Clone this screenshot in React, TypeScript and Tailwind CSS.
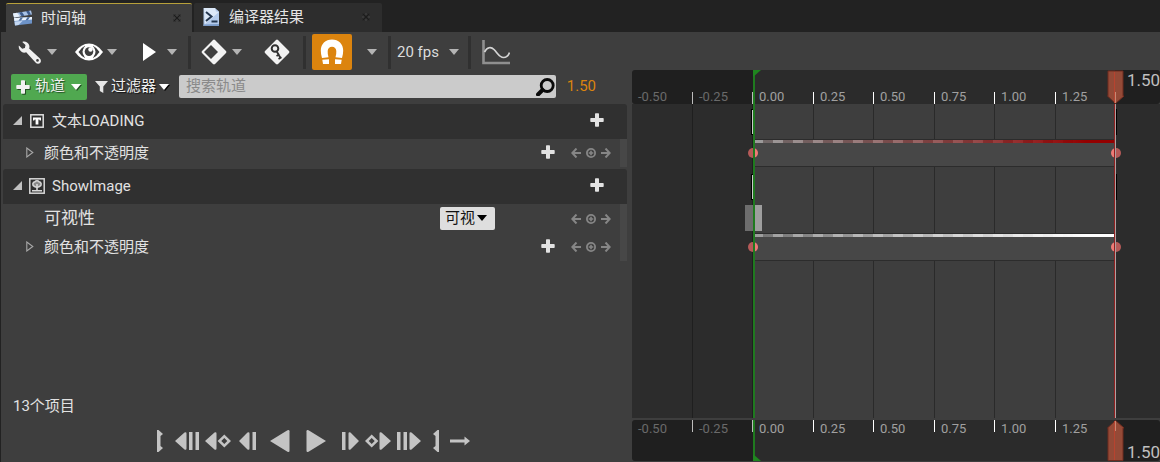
import React from "react";

const STEP_TIMES = [-0.25, 0, 0.25, 0.5, 0.75, 1, 1.25];
const LABEL_TIMES = [-0.5, ...STEP_TIMES];
const START = 0;
const END = 1.5;

const timeToX = (t: number) => Math.floor(120.7 + 242 * t);

function Caret({ className = "text-[#b4b4b4]" }: { className?: string }) {
  return (
    <svg className={`h-[6px] w-[10px] shrink-0 ${className}`} viewBox="0 0 10 6" fill="currentColor">
      <path d="M0 0h10L5 6z" />
    </svg>
  );
}

function Plus() {
  return (
    <svg className="size-[14px] shrink-0" viewBox="0 0 14 14" fill="currentColor">
      <path d="M5 1q0-.7.700-.7h2.600q.7 0 .7.700v4h4q.7 0 .7.700v2.600q0 .7-.7.700H9v4q0 .7-.7.700H5.700q-.7 0-.7-.7V9H1q-.7 0-.7-.7V5.700q0-.7.700-.7h4z" />
    </svg>
  );
}

function Separator() {
  return <div className="h-[33px] w-[3px] shrink-0 bg-[#303030]" />;
}

function CloseMark() {
  return (
    <svg className="size-[8px]" viewBox="0 0 8 8">
      <path d="M0 0h8v8H0z" fill="#222" opacity=".4" />
      <path d="M1 1l6 6M7 1L1 7" stroke="#1c1c1c" strokeWidth="1" />
      <path d="M4 0v2M4 8V6M0 4h2M8 4H6" stroke="#484848" />
    </svg>
  );
}

function ToolButton({ label, caret = true, children }: { label: string; caret?: boolean; children: React.ReactNode }) {
  return (
    <button type="button" aria-label={label} className="flex items-center gap-[3px]">
      <span className="flex h-[30px] w-[30px] items-center justify-center">{children}</span>
      {caret && <Caret />}
    </button>
  );
}

function Tabs() {
  return (
    <div className="flex h-8 items-end gap-[2px] bg-[#222] pl-[5px] text-[15px] text-[#e4e4e4] [text-shadow:1px_1px_1px_#000]">
      <div className="flex h-[29px] w-[186px] items-center rounded-t-[2px] border-t border-[#b7a03a] bg-[#3e3e3e] pr-[11px] pl-[7px]">
        <svg className="h-[16px] w-[20px]" viewBox="0 0 20 16">
          <path d="M0 3.500L18 .5l1 4L1 7.500z" fill="#a9c3e6" />
          <path d="M0 3.500l4-.7 3 3.700-6 1z" fill="#e8f1fc" />
          <path d="M6 2.500l3-.5 2.500 3.800-3 .5zM13 1.300l3-.5 2 3.900-2.600.4z" fill="#3d5c8c" />
          <path d="M1 8l18-1v6.500L2 15.500z" fill="#6d93c8" />
          <path d="M1 8l18-1v2.500L1.300 11z" fill="#eaf3fd" />
          <path d="M7.500 7.700l-2 3 2.500-.3 2-2.900zM14.500 7.300l-2 2.900 2.500-.3 2-2.800z" fill="#4c6d9c" />
          <path d="M1.500 11.500l8-.5-4 4L2 15.500z" fill="#c3d7f1" />
        </svg>
        <button type="button" className="ml-2 flex-1 text-left">时间轴</button>
        <button type="button" aria-label="关闭时间轴"><CloseMark /></button>
      </div>
      <div className="flex h-[29px] w-[188px] items-center rounded-t-[2px] bg-[#2d2d2d] pr-[12px] pb-px pl-[8px]">
        <svg className="h-[20px] w-[19px]" viewBox="0 0 19 20">
          <path d="M1.500 1H13l4 3.500V19H1.500z" fill="#b4cbec" />
          <path d="M2 1h11l1 3.500 3 .5-14 12z" fill="#dce8f8" />
          <path d="M1.500 17.500L17 17v2H1.500z" fill="#7c9cc9" />
          <path d="M4 5l5.500 4.500L4 14" fill="none" stroke="#23364f" strokeWidth="2" />
          <path d="M9.500 14.500h6" stroke="#23364f" strokeWidth="2" />
        </svg>
        <button type="button" className="ml-2 flex-1 text-left">编译器结果</button>
        <button type="button" aria-label="关闭编译器结果"><CloseMark /></button>
      </div>
    </div>
  );
}

function Toolbar() {
  return (
    <div className="flex h-[38px] items-center pt-[2px] pl-[13px] text-white">
      <div className="flex gap-[17px]">
        <ToolButton label="操作">
          <svg className="size-[23px]" viewBox="0 0 23 23">
            <path d="M4.300.9C7 0 10 1.300 11.100 4c.5 1.300.4 2.500 0 3.500l10.600 9.700c1.500 1.500 1.600 3.500.4 4.700s-3.200 1.100-4.600-.4L8.200 11.300c-1.600.6-3.300.4-4.700-.6C1.300 9.300.3 6.700.9 4.600L4.200 7.700 6.900 6.900l.6-2.800z" fill="#f0f0f0" />
            <circle cx="19.500" cy="19.400" r="1.300" fill="#3e3e3e" />
          </svg>
        </ToolButton>
        <ToolButton label="视图选项">
          <svg className="h-[18px] w-[28px]" viewBox="0 0 28 18">
            <path d="M0 9Q6 .5 14 .5T28 9q-6 8.500-14 8.500T0 9z" fill="#fff" />
            <path d="M3.500 9q3-4.500 6.500-6.200-2.500 6.200 0 12.200Q6.500 13.500 3.500 9zM24.500 9q-3-4.500-6.500-6.200 2.500 6.200 0 12.200Q21.500 13.500 24.500 9z" fill="#3e3e3e" />
            <circle cx="14" cy="8.800" r="6.500" fill="#fff" />
            <circle cx="14" cy="8.600" r="4.300" fill="#3e3e3e" />
            <circle cx="15.500" cy="6.500" r="2.200" fill="#fff" />
          </svg>
        </ToolButton>
        <ToolButton label="播放选项">
          <svg className="h-[18px] w-[14px]" viewBox="0 0 14 18"><path d="M1 0l13 9-13 9z" fill="#fff" /></svg>
        </ToolButton>
      </div>
      <div className="ml-[11px] flex items-center gap-2">
        <Separator />
        <div className="flex gap-5">
          <ToolButton label="关键帧选项">
            <svg className="size-[26px]" viewBox="0 0 26 26">
              <path d="M13 .4Q13.600.4 14 1l11 11q.9 1 0 2L14 25q-1 .9-2 0L1 14q-.9-1 0-2L12 1q.4-.6 1-.6z" fill="#f2f2f2" />
              <path d="M10 6l7 7-7 7-7-7z" fill="#3e3e3e" />
            </svg>
          </ToolButton>
          <ToolButton label="自动关键帧" caret={false}>
            <svg className="size-[26px]" viewBox="0 0 26 26">
              <path d="M13 .4Q13.600.4 14 1l11 11q.9 1 0 2L14 25q-1 .9-2 0L1 14q-.9-1 0-2L12 1q.4-.6 1-.6z" fill="#f2f2f2" />
              <circle cx="11" cy="9.500" r="3.300" fill="none" stroke="#303030" strokeWidth="2" />
              <path d="M12.500 12l4 7M12.500 17l3-1.800M14.500 20l3-1.800" fill="none" stroke="#303030" strokeWidth="1.800" />
            </svg>
          </ToolButton>
        </div>
      </div>
      <div className="ml-[11px] flex items-center gap-[6px]">
        <Separator />
        <button type="button" aria-label="对齐" aria-pressed="true" className="flex h-[36px] w-[40px] items-center justify-center rounded-[2px] bg-[#dc840e]">
          <svg className="h-[26px] w-[24px]" viewBox="0 0 24 26" fill="#fff">
            <path d="M2 19Q.8 15.500.8 11.500C.8 5 5.500.5 12 .5S23.200 5 23.200 11.500q0 4-1.200 7.500l-6.500-.8q1-3 .8-6.200C16.200 9.500 14.500 7.800 12 7.800S7.800 9.500 7.700 12q-.2 3.200.8 6.200z" />
            <path d="M2.300 20.800l6.700-.6V25H3zM21.700 20.800L15 20.200V25h6z" />
          </svg>
        </button>
      </div>
      <button type="button" aria-label="对齐选项" className="ml-[15px]"><Caret /></button>
      <div className="ml-[11px] flex items-center gap-[6px]">
        <Separator />
        <label className="relative flex items-center">
          <select aria-label="帧率" className="w-[62px] appearance-none bg-transparent text-[15px] text-[#dcdcdc] outline-none">
            <option>20 fps</option>
          </select>
          <Caret className="pointer-events-none absolute right-0 text-[#b4b4b4]" />
        </label>
      </div>
      <div className="ml-[9px] flex items-center gap-[11px]">
        <Separator />
        <button type="button" aria-label="曲线编辑器">
          <svg className="h-[26px] w-[28px]" viewBox="0 0 28 26" fill="none">
            <path d="M1.500 1v23H28" stroke="#8f8f8f" strokeWidth="2.600" />
            <path d="M2.500 13C5 8 9 7.500 12 10.500c3.500 3.500 5.500 8 9.500 8 3 0 5-2 6-5" stroke="#d4d4d4" strokeWidth="1.700" />
          </svg>
        </button>
      </div>
    </div>
  );
}

function FilterBar() {
  return (
    <div className="flex h-[34px] items-center pr-[36px] pb-px pl-[10px] text-[15px] text-[#f0f0f0]">
      <button type="button" className="flex h-[26px] items-center gap-[5px] rounded-[2px] bg-[#50a850] pr-[6px] pl-[5px] [text-shadow:1px_1px_1px_#245024]">
        <span className="drop-shadow-[1px_1px_0_#245024]"><Plus /></span>
        <span>轨道</span>
        <Caret className="ml-px text-white drop-shadow-[1px_1px_0_#245024]" />
      </button>
      <button type="button" className="ml-2 flex items-center gap-[3px] [text-shadow:1px_1px_1px_#111]">
        <svg className="h-[12px] w-[13px]" viewBox="0 0 13 12"><path d="M0 0h13L8.300 5.500V12l-3.500-2V5.500z" fill="#e6e6e6" /></svg>
        <span>过滤器</span>
        <Caret className="text-white drop-shadow-[1px_1px_0_#000]" />
      </button>
      <label className="ml-[10px] flex h-[23px] min-w-0 flex-1 items-center rounded-[2px] bg-[#cbcbcb] pr-px pl-[7px]">
        <input type="search" aria-label="搜索轨道" placeholder="搜索轨道" className="min-w-0 flex-1 bg-transparent text-[15px] text-[#222] outline-none placeholder:text-[#8a8a8a]" />
        <svg className="h-[18px] w-[19px]" viewBox="0 0 19 18" fill="none" stroke="#0a0a0a">
          <circle cx="11.200" cy="7.500" r="6" strokeWidth="2.800" />
          <path d="M6.500 12L2 16.500" strokeWidth="4" strokeLinecap="round" />
        </svg>
      </label>
      <span className="ml-[11px] text-[#dc840e]">1.50</span>
    </div>
  );
}

function GroupRow({ name, icon }: { name: string; icon: React.ReactNode }) {
  return (
    <div className="flex h-[35px] items-center rounded-t-[3px] bg-[#303030] pr-[23px] pb-px pl-[10px]">
      <button type="button" aria-label={`折叠 ${name}`} className="w-[10px] pb-[2px]">
        <svg className="size-[9px]" viewBox="0 0 9 9"><path d="M9 0v9H0z" fill="#c0c0c0" /></svg>
      </button>
      <span className="mr-[7px] ml-[6px] flex w-[16px] justify-center">{icon}</span>
      <span className="flex-1">{name}</span>
      <button type="button" aria-label={`添加到 ${name}`} className="pb-[2px]"><Plus /></button>
    </div>
  );
}

function KeyNav() {
  return (
    <div className="flex items-center gap-[5px] text-[#868686]">
      <button type="button" aria-label="上一个关键帧">
        <svg className="size-[10px]" viewBox="0 0 10 10" fill="none" stroke="currentColor" strokeWidth="2"><path d="M5.500.5L1.300 5l4.200 4.500M1.500 5H10" /></svg>
      </button>
      <button type="button" aria-label="添加关键帧">
        <svg className="size-[10px]" viewBox="0 0 10 10" fill="none" stroke="currentColor" strokeWidth="1.800"><circle cx="5" cy="5" r="4.100" /><path d="M5 2.700v4.600M2.700 5h4.600" strokeWidth="1.600" /></svg>
      </button>
      <button type="button" aria-label="下一个关键帧">
        <svg className="size-[10px]" viewBox="0 0 10 10" fill="none" stroke="currentColor" strokeWidth="2"><path d="M4.500.5L8.700 5 4.500 9.500M8.500 5H0" /></svg>
      </button>
    </div>
  );
}

function ColorRow() {
  return (
    <div className="flex h-[28px] items-center pl-[23px]">
      <button type="button" aria-label="展开" className="w-[18px] pb-[2px]">
        <svg className="h-[11px] w-[8px]" viewBox="0 0 8 11"><path d="M.8 1v9L6.800 5.500z" fill="none" stroke="#a8a8a8" strokeWidth="1.100" /></svg>
      </button>
      <span className="flex-1">颜色和不透明度</span>
      <button type="button" aria-label="添加颜色" className="mr-4 pb-[2px]"><Plus /></button>
      <KeyNav />
      <div className="ml-[9px] w-[7px] self-stretch bg-[#474747]" />
    </div>
  );
}

function Outliner() {
  return (
    <div className="mr-[5px] ml-[2px] text-[15px] text-[#e2e2e2]">
      <GroupRow
        name="文本LOADING"
        icon={
          <svg className="size-[14px]" viewBox="0 0 14 14">
            <rect x=".8" y=".8" width="12.400" height="12.400" fill="none" stroke="#e0e0e0" strokeWidth="1.500" />
            <path d="M3 3.500h8V6.500H9.800L9.300 5.400H8.400v5.100H5.600V5.400H4.700L4.200 6.500H3z" fill="#fff" />
          </svg>
        }
      />
      <div className="pb-[2px]"><ColorRow /></div>
      <GroupRow
        name="ShowImage"
        icon={
          <svg className="size-[16px]" viewBox="0 0 16 16" fill="none" stroke="#d8d8d8">
            <rect x=".8" y=".8" width="14.400" height="14.400" strokeWidth="1.500" />
            <path d="M5.500 8.500C2.800 7.500 3.500 4 6 3.800c1-1.300 3-1.300 4 0 2.500.2 3.200 3.700.5 4.700-1.500.8-3.500.8-5 0z" strokeWidth="1.500" fill="#8a8a8a" />
            <path d="M8 6v6.500M3 12.700h10" strokeWidth="1.600" />
          </svg>
        }
      />
      <div className="flex h-[29px] items-center pl-[41px]">
        <label htmlFor="visibility" className="flex-1 text-[17px]">可视性</label>
        <div className="relative mr-[76px] flex items-center pb-px">
          <select id="visibility" className="h-[23px] w-[55px] appearance-none rounded-[2px] bg-[#dedede] pl-[5px] text-[15px] leading-[22px] text-[#111] outline-none">
            <option>可视</option>
          </select>
          <Caret className="pointer-events-none absolute right-[8px] text-black" />
        </div>
        <KeyNav />
        <div className="ml-[9px] w-[7px] self-stretch bg-[#474747]" />
      </div>
      <ColorRow />
    </div>
  );
}

const TRANSPORT = [
  { label: "设置起点", box: "w-[18px]", w: 6, d: "M0 0h1.500L6 4 3.500 6v10L6 18l-4.500 4H0z" },
  { label: "到开头", box: "w-[36px]", w: 24, d: "M0 11L9.500 2.500q2-1 2 1v15q0 2-2 1zM14 2h3.500v18H14zM20.500 2H24v18h-3.500z" },
  { label: "上一关键帧", box: "w-[26px]", w: 26, d: "M0 11L9.500 2.500q2-1 2 1v15q0 2-2 1zM19.300 4.500L26 11l-6.700 6.500L12.600 11zM19.300 8l-3 3 3 3 3-3z" },
  { label: "后退一帧", box: "w-[34px]", w: 18, d: "M0 11L8.500 2.500q2-1 2 1v15q0 2-2 1zM13.500 2H17v18h-3.500z" },
  { label: "倒放", box: "w-[30px]", w: 20, d: "M0 11L17.500.3q2-.8 2 1v19.400q0 1.800-2 1z" },
  { label: "播放", box: "w-[42px]", w: 20, d: "M20 11L2.500.3q-2-.8-2 1v19.400q0 1.800 2 1z" },
  { label: "前进一帧", box: "w-[26px]", w: 18, d: "M1 2h3.500v18H1zM18 11L9.500 2.500q-2-1-2 1v15q0 2 2 1z" },
  { label: "下一关键帧", box: "w-[30px]", w: 26, d: "M26 11l-9.500-8.500q-2-1-2 1v15q0 2 2 1zM6.700 4.500L0 11l6.700 6.500 6.700-6.500zM6.700 8l3 3-3 3-3-3z" },
  { label: "到结尾", box: "w-[32px]", w: 24, d: "M24 11l-9.500-8.500q-2-1-2 1v15q0 2 2 1zM0 2h3.500v18H0zM6.500 2H10v18H6.500z" },
  { label: "设置终点", box: "w-[22px]", w: 6, d: "M6 0H4.500L0 4l2.500 2v10L0 18l4.500 4H6z" },
  { label: "循环模式", box: "w-[26px]", w: 20, d: "M0 9.500h14.500V6.500L20 11l-5.500 4.500v-3H0z" },
];

function Transport() {
  return (
    <div className="flex justify-center pr-[10px] pb-[10px] text-[#c4c4c4]">
      {TRANSPORT.map((b) => (
        <button key={b.label} type="button" aria-label={b.label} className={`flex justify-center ${b.box}`}>
          <svg width={b.w} height={22} viewBox={`0 0 ${b.w} 22`} fill="currentColor" fillRule="evenodd" className="shrink-0">
            <path d={b.d} />
          </svg>
        </button>
      ))}
    </div>
  );
}

function Ruler({ bottom = false }: { bottom?: boolean }) {
  return (
    <div className={`relative overflow-hidden rounded-[3px] bg-[#1f1f1f] ${bottom ? "h-[41px]" : "h-[34px]"}`}>
      <div className="absolute inset-y-0 bg-[#2b2b2b]" style={{ left: timeToX(START) + 1, width: timeToX(END) - timeToX(START) - 1 }} />
      {STEP_TIMES.map((t) => (
        <div
          key={t}
          className={`absolute h-[12px] w-px ${bottom ? "top-0" : "bottom-0"} ${t <= START ? "bg-[#bdbdbd]" : "bg-white"}`}
          style={{ left: timeToX(t) }}
        />
      ))}
      {LABEL_TIMES.map((t) => (
        <span
          key={t}
          className={`absolute text-[13px] leading-[14px] ${bottom ? "top-[2px]" : "bottom-0"} ${t < START ? "text-[#6a6a6a]" : "text-[#a0a0a0]"}`}
          style={{ left: timeToX(t) + 7 }}
        >
          {t.toFixed(2)}
        </span>
      ))}
      <div className="absolute inset-y-0 w-[2px] bg-[#1f7a1f]" style={{ left: timeToX(START) + 1 }} />
      <svg className={`absolute h-[7px] w-[8px] ${bottom ? "bottom-0" : "top-0"}`} viewBox="0 0 8 7" style={{ left: timeToX(START) + 1 }}>
        <path d={bottom ? "M0 0v7h8z" : "M0 0h8L0 7z"} fill="#1f851f" />
      </svg>
      <svg
        className={`absolute w-[18px] ${bottom ? "top-0 h-[41px]" : "bottom-0 h-[34px]"}`}
        viewBox={bottom ? "0 0 18 41" : "0 0 18 34"}
        style={{ left: timeToX(END) - 8 }}
      >
        <path
          d={bottom ? "M8.500.5L17 8h-1v32.500H1V8H.5z" : "M1 1h15v25h1L8.500 33.500.5 26H1z"}
          fill="#944a37"
          stroke="#6e2b1f"
        />
        <path d={bottom ? "M7.500 1v39" : "M7.500 2v31"} stroke="#b8432f" />
        <path d={bottom ? "M8.500 1v10" : "M8.500 22v11"} stroke="#c98873" />
      </svg>
      <span
        className={`absolute text-[17px] leading-[18px] text-[#c0c0c0] ${bottom ? "bottom-0" : "top-px"}`}
        style={{ left: timeToX(END) + 12 }}
      >
        1.50
      </span>
    </div>
  );
}

function Lane({ tint }: { tint: string }) {
  return (
    <div className="relative h-[28px] border-y border-[#2c2c2c] bg-[#474747]">
      <div className={`h-[3px] ${tint}`} />
      <div className="absolute top-[8px] -left-[5px] size-[10px] rounded-full bg-[linear-gradient(to_right,#b65a58_50%,#ef7b76_50%)]" />
      <div className="absolute top-[8px] -right-[6px] size-[10px] rounded-full bg-[linear-gradient(to_right,#ef7b76_50%,#b65a58_50%)]" />
    </div>
  );
}

function Brackets() {
  return (
    <div className="relative flex h-[35px] items-center">
      <div className="absolute -left-[2px] h-[26px] w-[2px] border-y border-l border-black bg-[#c9c9c9]" />
      <div className="absolute -right-[2px] h-[26px] w-[2px] border-y border-r border-black bg-[#c9c9c9]" />
    </div>
  );
}

function Timeline() {
  const left = timeToX(START) + 1;
  const width = timeToX(END) - left;
  return (
    <div className="flex min-w-0 flex-col overflow-hidden pb-px">
      <Ruler />
      <div className="relative mb-[2px] flex-1 overflow-hidden bg-[#2c2c2c]">
        <div className="absolute inset-y-0 bg-[#3e3e3e]" style={{ left, width }} />
        {STEP_TIMES.map((t) => (
          <div key={t} className={`absolute inset-y-0 w-px ${t <= START ? "bg-[#1f1f1f]" : "bg-[#2a2a2a]"}`} style={{ left: timeToX(t) }} />
        ))}
        <div className="relative" style={{ marginLeft: left, width }}>
          <Brackets />
          <div className="pb-[2px]">
            <Lane tint="bg-[linear-gradient(to_right,#90000000,#90000038_30%,#90000080_60%,#940000_92%),repeating-linear-gradient(to_right,#9c9c9c_0_10px,#706a6a_10px_20px)]" />
          </div>
          <Brackets />
          <div className="relative h-[29px]">
            <div className="absolute top-px -left-[8px] h-[26px] w-[17px] bg-[linear-gradient(to_right,#6d6d6d_50%,#9e9e9e_50%)]" />
          </div>
          <Lane tint="bg-[linear-gradient(to_right,#ffffff00,#ffffff48_30%,#ffffffa0_60%,#ffffff_92%),repeating-linear-gradient(to_right,#9c9c9c_0_10px,#727272_10px_20px)]" />
        </div>
        <div className="absolute inset-y-0 w-[2px] bg-[#1f7a1f]" style={{ left }} />
        <div className="absolute inset-y-0 w-[2px] border-l border-[#8f2020] bg-[#b0a0a0]" style={{ left: left + width - 1 }} />
      </div>
      <Ruler bottom />
    </div>
  );
}

export default function App() {
  return (
    <div className="flex min-h-screen flex-col overflow-hidden border-l border-[#222] bg-[#3e3e3e] font-['Roboto','Noto_Sans_CJK_SC',sans-serif]">
      <Tabs />
      <Toolbar />
      <main className="grid flex-1 grid-cols-[minmax(0,631fr)_minmax(0,528fr)]">
        <section className="flex min-w-0 flex-col">
          <FilterBar />
          <Outliner />
          <p className="mt-auto mb-[13px] ml-[12px] text-[15px] leading-[22px] text-[#e2e2e2]">13个项目</p>
          <Transport />
        </section>
        <Timeline />
      </main>
    </div>
  );
}
